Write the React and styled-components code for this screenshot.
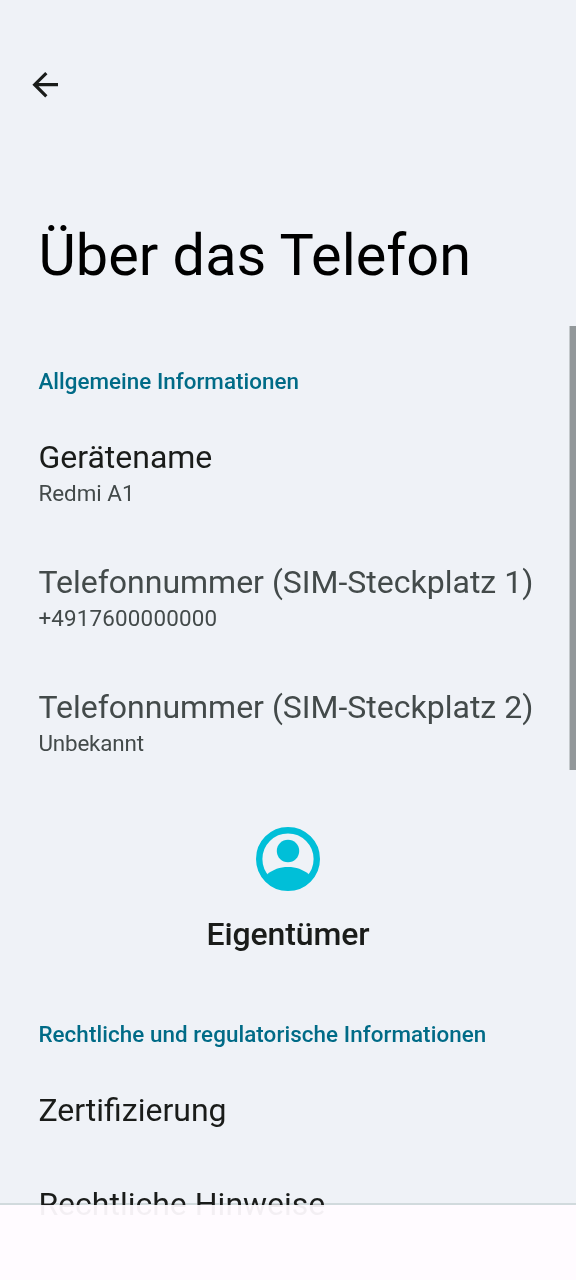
import styled, { createGlobalStyle } from "styled-components";

const GlobalStyle = createGlobalStyle`
  * {
    box-sizing: border-box;
  }
  body {
    margin: 0;
    background: #eff2f7;
    font-family: Roboto, sans-serif;
  }
`;

const Screen = styled.div`
  position: relative;
  display: flex;
  flex-direction: column;
  height: 1280px;
  overflow: hidden;
  background: #eff2f7;
`;
const Toolbar = styled.header`
  display: flex;
  align-items: center;
  height: 112px;
  flex: none;
  margin-top: 29px;
  padding-left: 26px;
`;
const BackButton = styled.button`
  display: flex;
  padding: 0;
  border: none;
  background: none;
  color: #1a1c1a;
`;
const Title = styled.h1`
  margin: 79px 0 73px;
  padding-left: 38.4px;
  font-size: 57.6px;
  line-height: 72px;
  font-weight: 400;
  letter-spacing: 0.04px;
  color: #000;
  white-space: nowrap;
`;
const Category = styled.h2`
  margin: 0 0 15px;
  padding-left: 38.4px;
  font-size: 22.4px;
  line-height: 32px;
  font-weight: 500;
  letter-spacing: ${(props) => props.$spacing || 0.03}px;
  color: #006b87;
  white-space: nowrap;
`;
const Row = styled.div`
  display: flex;
  flex-direction: column;
  flex: none;
  height: ${(props) => (props.$single ? 94 : 125)}px;
  padding: 26px 0 0 38.4px;
  color: ${(props) => (props.$disabled ? "#434a4a" : "#1a1c1a")};
  white-space: nowrap;
`;
const RowTitle = styled.div`
  font-size: 32px;
  line-height: 38px;
`;
const Summary = styled.div`
  font-size: 22.4px;
  line-height: 34px;
  letter-spacing: ${(props) => props.$spacing || 0}px;
  color: #434a4a;
`;
const Owner = styled.div`
  display: flex;
  flex-direction: column;
  align-items: center;
  flex: none;
  height: 231px;
  padding-top: 40px;
`;
const OwnerName = styled.div`
  margin-top: 24px;
  font-size: 32px;
  line-height: 38px;
  font-weight: 500;
  letter-spacing: -0.12px;
  color: #1a1c1a;
`;
const ScrollThumb = styled.div`
  position: absolute;
  top: 326px;
  right: 0;
  width: 7px;
  height: 444px;
  border-left: 1px solid #c4c9cc;
  background: #92989a;
`;
const NavigationBar = styled.div`
  position: absolute;
  bottom: 0;
  left: 0;
  right: 0;
  height: 75px;
  background: rgba(255, 251, 255, 0.95);
`;
// darken keeps the list text visible over the line
const Divider = styled.div`
  position: absolute;
  bottom: 75px;
  left: 0;
  right: 0;
  height: 2px;
  background: #d1dadd;
  mix-blend-mode: darken;
`;

const phoneInfo = [
  { title: "Gerätename", summary: "Redmi A1" },
  {
    title: "Telefonnummer (SIM-Steckplatz 1)",
    summary: "+4917600000000",
    disabled: true,
    spacing: 0.18,
  },
  {
    title: "Telefonnummer (SIM-Steckplatz 2)",
    summary: "Unbekannt",
    disabled: true,
    spacing: -0.15,
  },
];
const legalInfo = ["Zertifizierung", "Rechtliche Hinweise"];

function App() {
  return (
    <Screen>
      <GlobalStyle />
      <Toolbar>
        <BackButton aria-label="Zurück">
          <svg width="40" height="40" viewBox="0 -0.3 25 25" fill="currentColor">
            <path d="M20 11H7.83l5.59-5.59L12 4l-8 8 8 8 1.41-1.41L7.83 13H20z" />
          </svg>
        </BackButton>
      </Toolbar>
      <Title>Über das Telefon</Title>
      <Category>Allgemeine Informationen</Category>
      {phoneInfo.map((item) => (
        <Row key={item.title} $disabled={item.disabled}>
          <RowTitle>{item.title}</RowTitle>
          <Summary $spacing={item.spacing}>{item.summary}</Summary>
        </Row>
      ))}
      <Owner>
        <svg width="64" height="64" viewBox="0 0 64 64" fill="#00bfd8">
          <circle
            cx="32"
            cy="32"
            r="28.8"
            fill="none"
            stroke="#00bfd8"
            strokeWidth="6.4"
          />
          <circle cx="32" cy="24" r="11.2" />
          <path d="M11.2 47.2C16.8 42.6 24 40 32 40s15.2 2.6 20.8 7.2L50 55C40 62 24 62 14 55z" />
        </svg>
        <OwnerName>Eigentümer</OwnerName>
      </Owner>
      <Category $spacing={0.07}>
        Rechtliche und regulatorische Informationen
      </Category>
      {legalInfo.map((title) => (
        <Row key={title} $single>
          <RowTitle>{title}</RowTitle>
        </Row>
      ))}
      <ScrollThumb />
      <Divider />
      <NavigationBar />
    </Screen>
  );
}

export default App;
